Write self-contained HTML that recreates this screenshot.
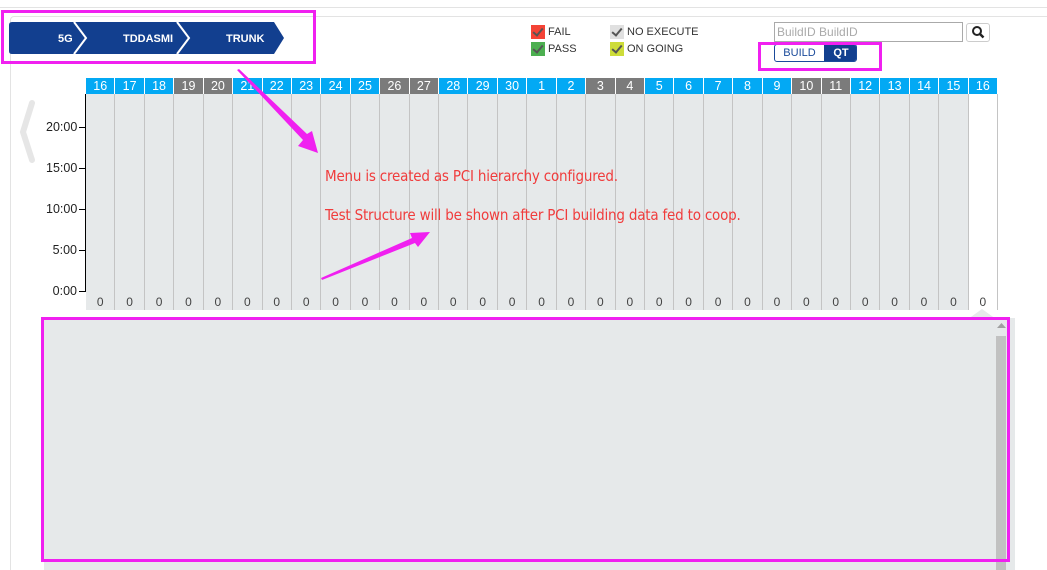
<!DOCTYPE html>
<html><head><meta charset="utf-8"><style>
*{margin:0;padding:0;box-sizing:border-box}
html,body{width:1047px;height:570px;overflow:hidden}
body{background:#fff;position:relative;font-family:"Liberation Sans","DejaVu Sans",sans-serif}
.abs{position:absolute}
#cols{position:absolute;left:86px;top:78px;width:912px;height:232px;display:flex}
.c{flex:1;display:flex;flex-direction:column;border-right:1px solid #c4c4c4}
.h{height:16px;background:#03a9f4;color:#fff;font-size:12.5px;text-align:center;line-height:16px;border-right:1px solid #fff;margin-right:-1px}
.h.g{background:#7b7b7b}
.b{flex:1;background:#e6e9ea;position:relative}
.b span{position:absolute;bottom:1px;left:0;right:0;text-align:center;font-size:12px;color:#444}
.c.w .b{background:#fff}
.tk{position:absolute;left:46px;font-size:12.5px;color:#222;width:31px;text-align:right}
.tl{position:absolute;left:79px;width:6px;height:1px;background:#000}
.red{position:absolute;left:325px;color:#f03c3c;font-size:15px;font-family:"DejaVu Sans Condensed","Liberation Sans",sans-serif;letter-spacing:-0.2px}
.leg{position:absolute;font-size:11px;color:#333;line-height:14px}
.cb{display:inline-block;width:14px;height:14px;vertical-align:top;margin-right:3px;position:relative}
.cb:after{content:"";position:absolute;left:4px;top:1px;width:4px;height:8px;border:solid #555;border-width:0 2.5px 2.5px 0;transform:rotate(40deg)}
</style></head><body>
<div class="abs" style="left:0;top:7px;width:1047px;height:1px;background:#e3e3e3"></div>
<div class="abs" style="left:10px;top:16px;width:1100px;height:560px;border:1px solid #e3e3e3;border-radius:4px"></div>
<!-- breadcrumb -->
<svg class="abs" style="left:8px;top:20px" width="280" height="36">
<path d="M4 2 H266 L276 18 L266 34 H4 Q1 34 1 31 V5 Q1 2 4 2Z" fill="#123f8f"/>
<path d="M66 2 L78 18 L66 34" fill="none" stroke="#fff" stroke-width="2"/>
<path d="M169 2 L181 18 L169 34" fill="none" stroke="#fff" stroke-width="2"/>
<text x="50" y="22" fill="#fff" font-size="11" font-weight="bold" font-family="Liberation Sans">5G</text>
<text x="115" y="22" fill="#fff" font-size="11" font-weight="bold" font-family="Liberation Sans">TDDASMI</text>
<text x="218" y="22" fill="#fff" font-size="11" font-weight="bold" font-family="Liberation Sans">TRUNK</text>
</svg>
<div class="abs" style="left:1px;top:10px;width:315px;height:54px;border:3px solid #f020f0"></div>
<!-- legend -->
<div class="leg" style="left:531px;top:25px"><span class="cb" style="background:#f44336"></span>FAIL</div>
<div class="leg" style="left:531px;top:42px"><span class="cb" style="background:#4caf50"></span>PASS</div>
<div class="leg" style="left:610px;top:25px"><span class="cb" style="background:#e0e0e0"></span>NO EXECUTE</div>
<div class="leg" style="left:610px;top:42px"><span class="cb" style="background:#cddc39"></span>ON GOING</div>
<!-- search -->
<div class="abs" style="left:774px;top:22px;width:189px;height:20px;border:1px solid #aaa;font-size:12px;color:#aaa;padding:2px 2px;line-height:14px">BuildID BuildID</div>
<div class="abs" style="left:966px;top:23px;width:24px;height:19px;border:1px solid #ccc;border-radius:3px"></div>
<svg class="abs" style="left:971px;top:25px" width="14" height="14"><circle cx="6" cy="6" r="4" fill="none" stroke="#222" stroke-width="2"/><path d="M9 9 L12.5 12.5" stroke="#222" stroke-width="2.5"/></svg>
<div class="abs" style="left:774px;top:44px;width:83px;height:18px;border:1px solid #1a4a9a;border-radius:3px;overflow:hidden;font-size:11px;line-height:16px">
<span style="position:absolute;left:0;width:49px;text-align:center;color:#1a4a9a">BUILD</span>
<span style="position:absolute;left:49px;width:34px;height:18px;background:#123f8f;color:#fff;text-align:center;font-weight:bold">QT</span></div>
<div class="abs" style="left:758px;top:42px;width:124px;height:29px;border:3px solid #f020f0"></div>
<!-- left chevron -->
<svg class="abs" style="left:18px;top:98px" width="24" height="68"><path d="M14 5 L5 34 L14 62" fill="none" stroke="#e6e6e6" stroke-width="6" stroke-linecap="round"/></svg>
<!-- axis -->
<div class="abs" style="left:85px;top:94px;width:1px;height:198px;background:#000"></div>
<div class="tk" style="top:120px">20:00</div><div class="tl" style="top:127px"></div>
<div class="tk" style="top:161px">15:00</div><div class="tl" style="top:168px"></div>
<div class="tk" style="top:202px">10:00</div><div class="tl" style="top:209px"></div>
<div class="tk" style="top:243px">5:00</div><div class="tl" style="top:250px"></div>
<div class="tk" style="top:284px">0:00</div><div class="tl" style="top:291px"></div>
<div id="cols">
<div class="c"><div class="h">16</div><div class="b"><span>0</span></div></div>
<div class="c"><div class="h">17</div><div class="b"><span>0</span></div></div>
<div class="c"><div class="h">18</div><div class="b"><span>0</span></div></div>
<div class="c"><div class="h g">19</div><div class="b"><span>0</span></div></div>
<div class="c"><div class="h g">20</div><div class="b"><span>0</span></div></div>
<div class="c"><div class="h">21</div><div class="b"><span>0</span></div></div>
<div class="c"><div class="h">22</div><div class="b"><span>0</span></div></div>
<div class="c"><div class="h">23</div><div class="b"><span>0</span></div></div>
<div class="c"><div class="h">24</div><div class="b"><span>0</span></div></div>
<div class="c"><div class="h">25</div><div class="b"><span>0</span></div></div>
<div class="c"><div class="h g">26</div><div class="b"><span>0</span></div></div>
<div class="c"><div class="h g">27</div><div class="b"><span>0</span></div></div>
<div class="c"><div class="h">28</div><div class="b"><span>0</span></div></div>
<div class="c"><div class="h">29</div><div class="b"><span>0</span></div></div>
<div class="c"><div class="h">30</div><div class="b"><span>0</span></div></div>
<div class="c"><div class="h">1</div><div class="b"><span>0</span></div></div>
<div class="c"><div class="h">2</div><div class="b"><span>0</span></div></div>
<div class="c"><div class="h g">3</div><div class="b"><span>0</span></div></div>
<div class="c"><div class="h g">4</div><div class="b"><span>0</span></div></div>
<div class="c"><div class="h">5</div><div class="b"><span>0</span></div></div>
<div class="c"><div class="h">6</div><div class="b"><span>0</span></div></div>
<div class="c"><div class="h">7</div><div class="b"><span>0</span></div></div>
<div class="c"><div class="h">8</div><div class="b"><span>0</span></div></div>
<div class="c"><div class="h">9</div><div class="b"><span>0</span></div></div>
<div class="c"><div class="h g">10</div><div class="b"><span>0</span></div></div>
<div class="c"><div class="h g">11</div><div class="b"><span>0</span></div></div>
<div class="c"><div class="h">12</div><div class="b"><span>0</span></div></div>
<div class="c"><div class="h">13</div><div class="b"><span>0</span></div></div>
<div class="c"><div class="h">14</div><div class="b"><span>0</span></div></div>
<div class="c"><div class="h">15</div><div class="b"><span>0</span></div></div>
<div class="c w"><div class="h">16</div><div class="b"><span>0</span></div></div>
</div>
<div class="red" style="top:167px">Menu is created as PCI hierarchy configured.</div>
<div class="red" style="top:206px">Test Structure will be shown after PCI building data fed to coop.</div>
<!-- bottom panel -->
<div class="abs" style="left:44px;top:318px;width:971px;height:252px;background:#e6e9ea"></div>
<svg class="abs" style="left:968px;top:308px" width="30" height="12"><path d="M0 11 L14 1 L28 11Z" fill="#e6e9ea"/></svg>
<div class="abs" style="left:996px;top:336px;width:10px;height:234px;background:#c1c1c1"></div>
<svg class="abs" style="left:997px;top:323px" width="9" height="6"><path d="M0 5 L4.5 0 L9 5Z" fill="#a0a0a0"/></svg>
<div class="abs" style="left:41px;top:317px;width:969px;height:245px;border:3px solid #f020f0"></div>
<!-- arrows -->
<svg class="abs" style="left:0;top:0" width="1047" height="570">
<path d="M237 70 L239 69 L307 134 L312 131 L318 153 L298 146 L303 140 Z" fill="#f020f0"/>
<path d="M322 280 L321 278 L412 238 L410 233 L430 232 L418 247 L415 243 Z" fill="#f020f0"/>
</svg>
</body></html>
